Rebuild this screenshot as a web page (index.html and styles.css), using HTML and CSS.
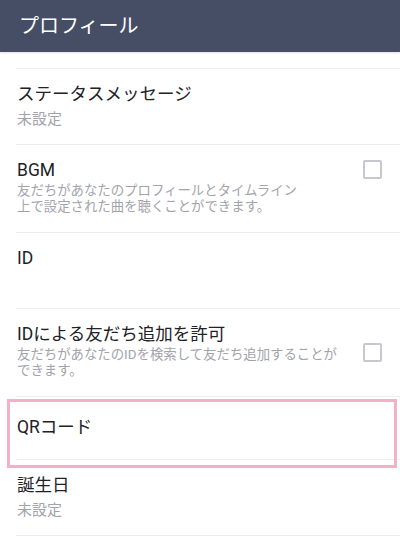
FILE: index.html
```html
<!DOCTYPE html>
<html lang="ja">
<head>
    <meta charset="UTF-8">
    <meta name="viewport" content="width=device-width, initial-scale=1.0">
    <title>プロフィール</title>
    <link rel="stylesheet" href="styles.css">
</head>
<body>

<!-- App bar -->
<header class="app-bar">
    <h1>プロフィール</h1>
</header>

<!-- Preference list -->
<ul class="pref-list">
    <li class="pref pref-cut"></li>
    <li class="pref">
        <div class="pref-text">
            <div class="pref-title">ステータスメッセージ</div>
            <div class="pref-value">未設定</div>
        </div>
    </li>
    <li class="pref">
        <div class="pref-text">
            <div class="pref-title">BGM</div>
            <div class="pref-desc">友だちがあなたのプロフィールとタイムライン<br>上で設定された曲を聴くことができます。</div>
        </div>
        <span class="checkbox checkbox-top"></span>
    </li>
    <li class="pref">
        <div class="pref-text">
            <div class="pref-title">ID</div>
            <div class="pref-value"></div>
        </div>
    </li>
    <li class="pref">
        <div class="pref-text">
            <div class="pref-title">IDによる友だち追加を許可</div>
            <div class="pref-desc">友だちがあなたのIDを検索して友だち追加することが<br>できます。</div>
        </div>
        <span class="checkbox"></span>
    </li>
    <li class="pref pref-single highlighted">
        <div class="pref-text">
            <div class="pref-title">QRコード</div>
        </div>
    </li>
    <li class="pref">
        <div class="pref-text">
            <div class="pref-title">誕生日</div>
            <div class="pref-value">未設定</div>
        </div>
    </li>
</ul>

</body>
</html>
```

FILE: styles.css
```css
body {
    font-family: Roboto, "Noto Sans CJK JP", sans-serif;
    margin: 0;
    padding: 0;
    background-color: #ffffff;
    overflow: hidden;
}

/* App bar */
.app-bar {
    height: 52px;
    background-color: #464e66;
    box-shadow: 0 1px 2px rgba(0, 0, 0, 0.12);
    display: flex;
    align-items: center;
    padding-left: 19px;
    position: relative;
    z-index: 1;
}
.app-bar h1 {
    margin: 0;
    color: #ffffff;
    font-size: 20px;
    font-weight: normal;
    line-height: 26px;
}

/* Preference list */
.pref-list {
    list-style: none;
    margin: 0;
    padding: 0;
}
.pref {
    display: flex;
    align-items: center;
    margin-left: 16px;
    padding: 13px 18px 13px 1px;
    border-bottom: 1px solid #ededef;
    position: relative;
}
.pref-cut {
    height: 16px;
    padding: 0;
}
.pref-single {
    padding-top: 18px;
    padding-bottom: 19px;
}
.pref-text {
    flex: 1;
}
.pref-title {
    font-size: 17.5px;
    line-height: 25px;
    color: #222226;
}
.pref-value {
    font-size: 15px;
    line-height: 24px;
    height: 24px;
    color: #a2a4ab;
}
.pref-desc {
    font-size: 13.4px;
    line-height: 16px;
    color: #a2a4ab;
    margin-bottom: 4px;
}

/* Checkbox */
.checkbox {
    width: 15px;
    height: 15px;
    border: 2px solid #c6c7cf;
    border-radius: 2px;
    flex-shrink: 0;
}
.checkbox-top {
    align-self: flex-start;
    margin-top: 2px;
}

/* Focus highlight */
.highlighted::after {
    content: "";
    position: absolute;
    top: 2px;
    left: -9px;
    right: 3px;
    height: 63px;
    border: 3px solid #f2b0c9;
}
```
